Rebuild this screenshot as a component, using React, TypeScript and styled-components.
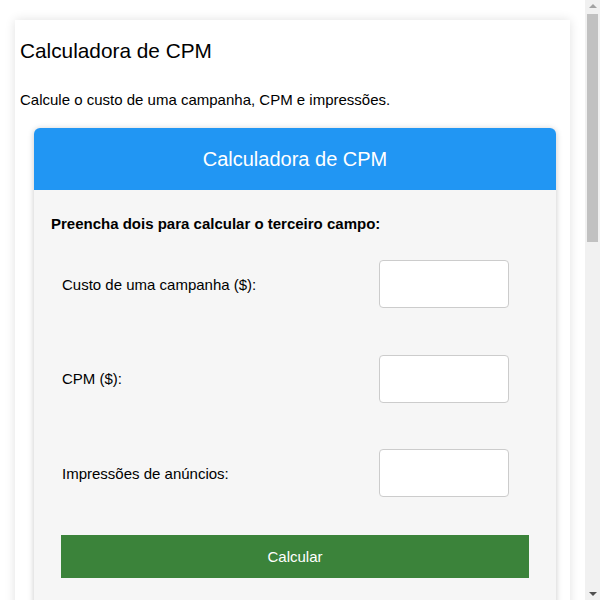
import styled, { createGlobalStyle } from 'styled-components';

const GlobalStyle = createGlobalStyle`
  html, body {
    margin: 0;
    padding: 0;
    background: #fff;
    font-family: "Liberation Sans", Arial, sans-serif;
    color: #000;
  }
`

const Page = styled.main`
  padding: 20px 30px 40px 15px;
`

const Card = styled.section`
  background: #fff;
  box-shadow: 0 0 10px rgba(0, 0, 0, 0.12);
  padding: 0 5px 30px;
`

const Title = styled.h2`
  font-size: 20.8px;
  font-weight: 400;
  line-height: 24px;
  margin: 0;
  padding-top: 19px;
`

const Intro = styled.p`
  font-size: 15px;
  line-height: 17px;
  margin: 28px 0 20px;
`

const Calculator = styled.div`
  margin: 0 9px 0 14px;
  background: #f6f6f6;
  border-radius: 6px;
  box-shadow: 0 1px 6px rgba(0, 0, 0, 0.22);
  overflow: hidden;
`

const Header = styled.header`
  background: #2196f3;
  color: #fff;
  height: 62px;
  display: flex;
  align-items: center;
  justify-content: center;
  font-size: 20px;
`

const Body = styled.div`
  padding: 25px 27px 40px 17px;
`

const Hint = styled.p`
  font-size: 15px;
  font-weight: 700;
  line-height: 17px;
  margin: 0 0 28px;
`

const Fields = styled.div`
  display: flex;
  flex-direction: column;
  gap: 46.5px;
  padding-left: 10px;
`

const Row = styled.label`
  display: grid;
  grid-template-columns: 1fr 130px;
  align-items: center;
  padding: 0 20px 0 1px;
  font-size: 15px;
`

const Input = styled.input`
  box-sizing: border-box;
  width: 130px;
  height: 48px;
  border: 1px solid #ccc;
  border-radius: 4px;
  background: #fff;
  font-size: 15px;
  padding: 0 8px;
`

const Button = styled.button`
  display: block;
  width: 468px;
  height: 43px;
  margin: 38px 0 0 10px;
  border: none;
  background: #3b833a;
  color: #fff;
  font-family: inherit;
  font-size: 15px;
  cursor: pointer;
`

const Section = styled.div`
  padding: 40px 5px 0;
  font-size: 15px;
  line-height: 24px;
`

const SectionTitle = styled.h3`
  font-size: 18px;
  font-weight: 400;
  margin: 0 0 16px;
`

const Result = styled.div`
  margin-top: 30px;
  font-size: 15px;
  font-weight: 700;
`

/* classic scrollbar, drawn over the right edge */
const ScrollTrack = styled.div`
  position: fixed;
  top: 0;
  right: 0;
  width: 15px;
  height: 100vh;
  background: #f1f1f1;
  display: flex;
  flex-direction: column;
  align-items: center;
`

const Arrow = styled.div<{ $down?: boolean; $dim?: boolean }>`
  height: 12px;
  width: 15px;
  display: flex;
  align-items: center;
  justify-content: center;
  &::after {
    content: '';
    border-left: 4px solid transparent;
    border-right: 4px solid transparent;
    ${(p) => (p.$down ? 'border-top' : 'border-bottom')}: 4px solid ${(p) => (p.$dim ? '#a3a3a3' : '#505050')};
  }
`

const Thumb = styled.div`
  width: 11px;
  margin-left: 2px;
  align-self: flex-start;
  height: 228px;
  margin-top: 2px;
  background: #c1c1c1;
`

const Spacer = styled.div`
  flex: 1;
`

const App: React.FC = () => {
  return (
    <>
      <GlobalStyle />
      <Page>
        <Card>
          <Title>Calculadora de CPM</Title>
          <Intro>Calcule o custo de uma campanha, CPM e impressões.</Intro>
          <Calculator>
            <Header>Calculadora de CPM</Header>
            <Body>
              <Hint>Preencha dois para calcular o terceiro campo:</Hint>
              <Fields>
                <Row>
                  Custo de uma campanha ($):
                  <Input type="text" />
                </Row>
                <Row>
                  CPM ($):
                  <Input type="text" />
                </Row>
                <Row>
                  Impressões de anúncios:
                  <Input type="text" />
                </Row>
              </Fields>
              <Button>Calcular</Button>
              <Result>Resultado:</Result>
            </Body>
          </Calculator>
          <Section>
            <SectionTitle>O que é CPM?</SectionTitle>
            <p>CPM significa custo por mil impressões. É uma métrica usada em publicidade para indicar quanto custa exibir um anúncio mil vezes.</p>
            <SectionTitle>Fórmula do CPM</SectionTitle>
            <p>CPM = (Custo da campanha / Impressões) × 1000</p>
            <p>Custo da campanha = (CPM × Impressões) / 1000</p>
            <p>Impressões = (Custo da campanha / CPM) × 1000</p>
            <SectionTitle>Exemplo</SectionTitle>
            <p>Uma campanha que custa $500 e gera 250.000 impressões tem um CPM de $2,00.</p>
            <p>Se o CPM for $4,00 e o orçamento for $1.000, a campanha gerará 250.000 impressões.</p>
            <SectionTitle>Como usar a calculadora</SectionTitle>
            <p>Preencha dois dos três campos acima e clique em Calcular. O valor que falta será calculado automaticamente.</p>
            <p>Os valores devem ser números positivos. Use ponto como separador decimal.</p>
          </Section>
        </Card>
      </Page>
      <ScrollTrack>
        <Arrow $dim />
        <Thumb />
        <Spacer />
        <Arrow $down />
      </ScrollTrack>
    </>
  );
}

export default App;
